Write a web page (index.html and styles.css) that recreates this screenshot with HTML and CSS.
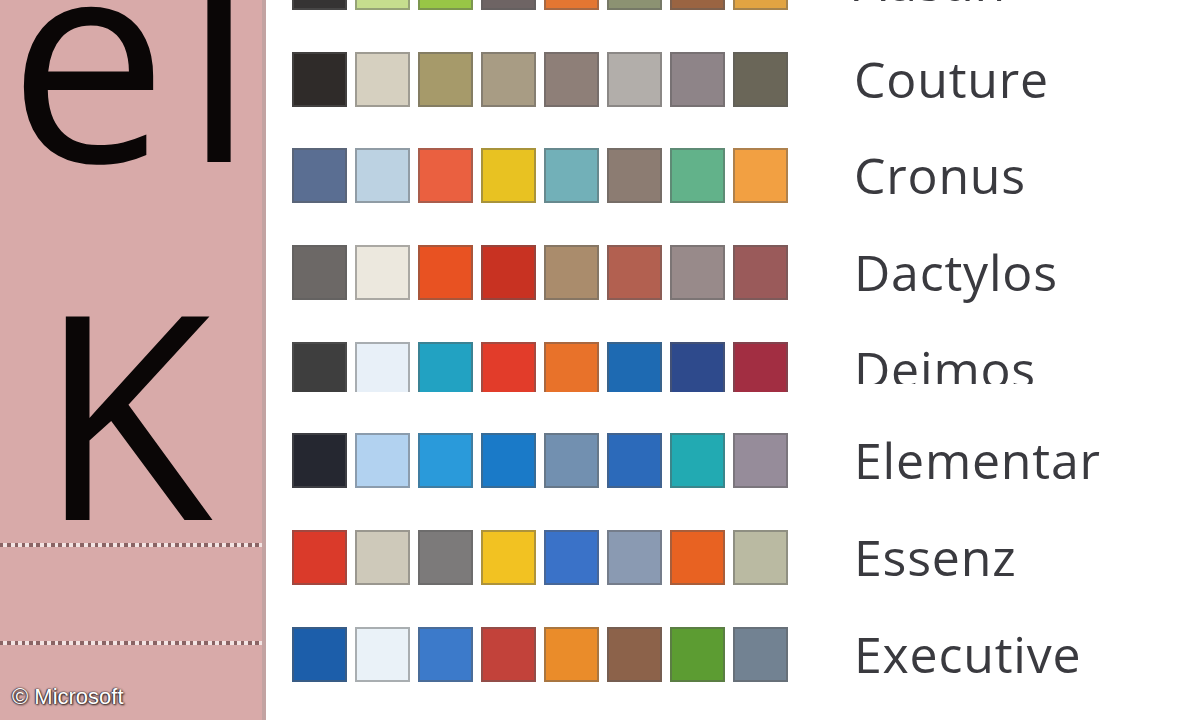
FILE: index.html
```html
<!DOCTYPE html>
<html lang="de">
<head>
<meta charset="utf-8">
<title>Farben</title>
<link rel="stylesheet" href="styles.css">
</head>
<body>
<div class="screen">
  <aside class="preview">
    <div class="glyph glyph-el">el</div>
    <div class="glyph glyph-k">K</div>
    <div class="dotline"></div>
    <div class="band"></div>
    <div class="dotline"></div>
    <div class="credit">© Microsoft</div>
  </aside>
  <main class="themes">
    <div class="row row-first">
      <div class="swatches">
        <span class="sw" style="background:#353333"></span>
        <span class="sw" style="background:#c6de8e"></span>
        <span class="sw" style="background:#98c646"></span>
        <span class="sw" style="background:#6e6464"></span>
        <span class="sw" style="background:#e47632"></span>
        <span class="sw" style="background:#8c9272"></span>
        <span class="sw" style="background:#9a6442"></span>
        <span class="sw" style="background:#e2a442"></span>
      </div>
      <span class="label">Austin</span>
    </div>
    <div class="row">
      <div class="swatches">
        <span class="sw" style="background:#2f2b29"></span>
        <span class="sw" style="background:#d6d0c0"></span>
        <span class="sw" style="background:#a69a6a"></span>
        <span class="sw" style="background:#a89c84"></span>
        <span class="sw" style="background:#8e7f78"></span>
        <span class="sw" style="background:#b2aeaa"></span>
        <span class="sw" style="background:#8e8488"></span>
        <span class="sw" style="background:#6a6658"></span>
      </div>
      <span class="label">Couture</span>
    </div>
    <div class="row">
      <div class="swatches">
        <span class="sw" style="background:#5a6e92"></span>
        <span class="sw" style="background:#bcd2e2"></span>
        <span class="sw" style="background:#ea6040"></span>
        <span class="sw" style="background:#e8c222"></span>
        <span class="sw" style="background:#72b0b8"></span>
        <span class="sw" style="background:#8c7c72"></span>
        <span class="sw" style="background:#62b28a"></span>
        <span class="sw" style="background:#f2a042"></span>
      </div>
      <span class="label">Cronus</span>
    </div>
    <div class="row">
      <div class="swatches">
        <span class="sw" style="background:#6c6866"></span>
        <span class="sw" style="background:#ece8de"></span>
        <span class="sw" style="background:#e85222"></span>
        <span class="sw" style="background:#c83222"></span>
        <span class="sw" style="background:#aa8c6c"></span>
        <span class="sw" style="background:#b26050"></span>
        <span class="sw" style="background:#988a8a"></span>
        <span class="sw" style="background:#9a5a5a"></span>
      </div>
      <span class="label">Dactylos</span>
    </div>
    <div class="row row-clipped">
      <div class="swatches">
        <span class="sw" style="background:#3e3e3e"></span>
        <span class="sw" style="background:#e8f0f8"></span>
        <span class="sw" style="background:#22a2c2"></span>
        <span class="sw" style="background:#e23c2a"></span>
        <span class="sw" style="background:#e8722a"></span>
        <span class="sw" style="background:#1e6ab2"></span>
        <span class="sw" style="background:#2e4a8c"></span>
        <span class="sw" style="background:#a22e42"></span>
      </div>
      <span class="label">Deimos</span>
    </div>
    <div class="row">
      <div class="swatches">
        <span class="sw" style="background:#252730"></span>
        <span class="sw" style="background:#b2d2f0"></span>
        <span class="sw" style="background:#2a9ada"></span>
        <span class="sw" style="background:#1a7ac8"></span>
        <span class="sw" style="background:#7290b0"></span>
        <span class="sw" style="background:#2c6aba"></span>
        <span class="sw" style="background:#22aab2"></span>
        <span class="sw" style="background:#968c9a"></span>
      </div>
      <span class="label">Elementar</span>
    </div>
    <div class="row">
      <div class="swatches">
        <span class="sw" style="background:#da3a2a"></span>
        <span class="sw" style="background:#cec9ba"></span>
        <span class="sw" style="background:#7c7a7a"></span>
        <span class="sw" style="background:#f2c222"></span>
        <span class="sw" style="background:#3a72c8"></span>
        <span class="sw" style="background:#8a9ab2"></span>
        <span class="sw" style="background:#e86222"></span>
        <span class="sw" style="background:#babaa2"></span>
      </div>
      <span class="label">Essenz</span>
    </div>
    <div class="row">
      <div class="swatches">
        <span class="sw" style="background:#1c5eaa"></span>
        <span class="sw" style="background:#eaf2f8"></span>
        <span class="sw" style="background:#3c7aca"></span>
        <span class="sw" style="background:#c2423a"></span>
        <span class="sw" style="background:#ea8c2a"></span>
        <span class="sw" style="background:#8c624a"></span>
        <span class="sw" style="background:#5c9c32"></span>
        <span class="sw" style="background:#728292"></span>
      </div>
      <span class="label">Executive</span>
    </div>
  </main>
</div>
</body>
</html>
```

FILE: styles.css
```css
html, body {
  margin: 0;
  padding: 0;
  background: #ffffff;
}

body {
  width: 1200px;
  height: 720px;
  overflow: hidden;
  font-family: "Open Sans", "Noto Sans", sans-serif;
}

.screen {
  display: flex;
  width: 1200px;
  height: 720px;
  overflow: hidden;
}

/* ---------- left preview pane ---------- */
.preview {
  flex: 0 0 262px;
  height: 720px;
  background: #d8aaa9;
  border-right: 4px solid #c3a3a2;
  display: flex;
  flex-direction: column;
  overflow: hidden;
}

.glyph {
  font-family: "Open Sans", "Noto Sans", sans-serif;
  font-size: 285px;
  line-height: 220px;
  height: 220px;
  flex: 0 0 220px;
  color: #0a0606;
  white-space: nowrap;
}

.glyph-el {
  margin-top: -59px;
  padding-left: 8px;
  letter-spacing: 15px;
}

.glyph-k {
  margin-top: 138px;
  padding-left: 38px;
}

.dotline {
  flex: 0 0 4px;
  height: 4px;
  margin-top: 24px;
  background: repeating-linear-gradient(90deg, #8a6464 0 3.5px, #f3e4e3 3.5px 7.3px);
}

.band {
  flex: 0 0 94px;
  height: 94px;
}

.band + .dotline {
  margin-top: 0;
}

.credit {
  margin-top: 39px;
  padding-left: 12px;
  font-family: "Liberation Sans", Arial, sans-serif;
  font-size: 22px;
  line-height: 25px;
  color: #ffffff;
  text-shadow: 0 0 2px #2e2222, 1px 1px 2px #2e2222, -1px 0 1px #5a4444;
  white-space: nowrap;
}

/* ---------- right theme list ---------- */
.themes {
  flex: 1;
  display: flex;
  flex-direction: column;
  gap: 41.7px;
  padding-left: 26px;
}

.row {
  display: flex;
  align-items: center;
  height: 55px;
  flex: 0 0 55px;
}

.row-first {
  margin-top: -45px;
}

.row-clipped {
  height: 50px;
  flex-basis: 50px;
  overflow: hidden;
  align-items: flex-start;
}

.swatches {
  display: flex;
  gap: 8px;
  height: 55px;
}

.sw {
  display: block;
  width: 55px;
  height: 55px;
  box-shadow: inset 0 0 0 2px rgba(92, 92, 92, 0.45);
}

.label {
  margin-left: 66px;
  font-size: 50px;
  line-height: 55px;
  height: 55px;
  letter-spacing: 0.8px;
  color: #3a3a3f;
  white-space: nowrap;
}

.row-clipped .label {
  height: 42px;
  overflow: hidden;
}
```
